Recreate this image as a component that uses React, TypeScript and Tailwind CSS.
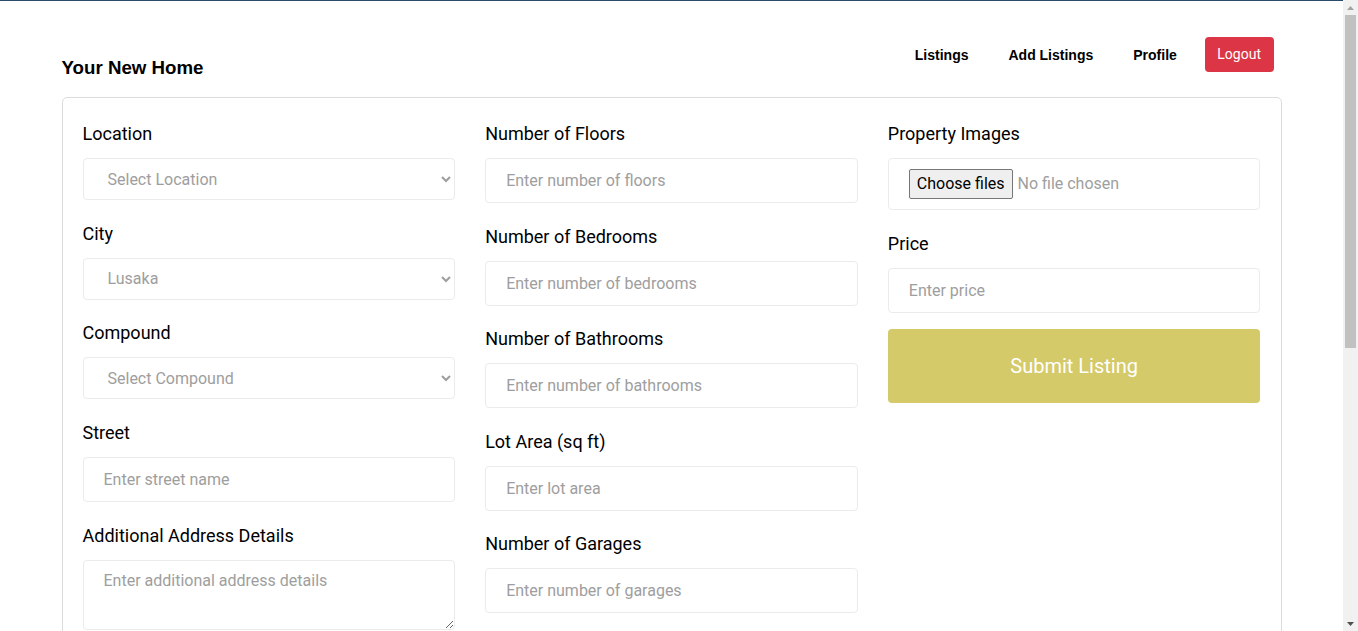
import React from "react";

const inputCls =
  "block w-full h-[45px] px-[20px] border border-[#ebebeb] rounded-[4px] bg-white text-[16px] text-[#444] placeholder:text-[#9e9e9e] outline-none";
const selectCls =
  "block w-full h-[42px] px-[20px] border border-[#ebebeb] rounded-[4px] bg-white text-[16px] text-[#9e9e9e] outline-none";

function Field({
  label,
  children,
  className = "mb-[19.5px]",
}: {
  label: string;
  children: React.ReactNode;
  className?: string;
}) {
  return (
    <div className={className}>
      <label className="block text-[18px] leading-[27px] mb-[11px] text-black">{label}</label>
      {children}
    </div>
  );
}

// fake browser scrollbar, the page in the shot is scrolled to the top
function Scrollbar() {
  return (
    <aside className="w-[15px] h-full bg-[#f1f1f1] flex flex-col items-center shrink-0">
      <div className="h-[15px] w-full flex items-center justify-center">
        <svg width="7" height="4" viewBox="0 0 7 4">
          <path d="M0 4 L3.5 0 L7 4 Z" fill="#a3a3a3" />
        </svg>
      </div>
      <div className="w-[11px] h-[333px] bg-[#c1c1c1]" />
      <div className="flex-1" />
      <div className="h-[15px] w-full flex items-center justify-center">
        <svg width="7" height="4" viewBox="0 0 7 4">
          <path d="M0 0 L7 0 L3.5 4 Z" fill="#505050" />
        </svg>
      </div>
    </aside>
  );
}

export default function App() {
  return (
    <div className="h-screen flex overflow-hidden bg-white font-['Roboto',sans-serif]">
      <main className="flex-1 border-t border-[#2d4a68] overflow-hidden">
        <div className="w-[1220px] mx-auto">
          {/* header */}
          <header className="h-[96px] pt-[36px] flex justify-between items-start">
            <h3 className="mt-[20px] leading-[22px] text-[18.72px] font-bold text-black font-['Liberation_Sans',Arial,sans-serif]">
              Your New Home
            </h3>
            <nav className="flex items-center mr-[8px]">
              <div className="flex items-center gap-[40px] pt-[2px] font-['Liberation_Sans',Arial,sans-serif] text-[14px] font-bold text-black">
                <a href="#">Listings</a>
                <a href="#">Add Listings</a>
                <a href="#">Profile</a>
              </div>
              <button className="ml-[28px] h-[35px] px-[12.5px] rounded-[4px] bg-[#dc3545] text-white text-[14px] font-['Roboto',sans-serif]">
                Logout
              </button>
            </nav>
          </header>

          {/* form card */}
          <form className="border border-[#dcdcdc] rounded-[5px] px-[20px] pt-[22px] min-h-[1000px]">
            <div className="grid grid-cols-3 gap-x-[30px]">
              <div>
                <Field label="Location">
                  <select className={selectCls} defaultValue="">
                    <option value="">Select Location</option>
                  </select>
                </Field>
                <Field label="City">
                  <select className={selectCls} defaultValue="lusaka">
                    <option value="lusaka">Lusaka</option>
                  </select>
                </Field>
                <Field label="Compound">
                  <select className={selectCls} defaultValue="">
                    <option value="">Select Compound</option>
                  </select>
                </Field>
                <Field label="Street" className="mb-[20px]">
                  <input className={inputCls} placeholder="Enter street name" />
                </Field>
                <Field label="Additional Address Details">
                  <textarea
                    className="block w-full h-[70px] px-[20px] py-[10px] border border-[#ebebeb] rounded-[4px] bg-white text-[16px] leading-[20px] placeholder:text-[#9e9e9e] outline-none"
                    placeholder="Enter additional address details"
                  />
                </Field>
              </div>

              <div>
                <Field label="Number of Floors">
                  <input className={inputCls} placeholder="Enter number of floors" />
                </Field>
                <Field label="Number of Bedrooms">
                  <input className={inputCls} placeholder="Enter number of bedrooms" />
                </Field>
                <Field label="Number of Bathrooms">
                  <input className={inputCls} placeholder="Enter number of bathrooms" />
                </Field>
                <Field label="Lot Area (sq ft)">
                  <input className={inputCls} placeholder="Enter lot area" />
                </Field>
                <Field label="Number of Garages">
                  <input className={inputCls} placeholder="Enter number of garages" />
                </Field>
              </div>

              <div>
                <Field label="Property Images">
                  <label className="flex items-center h-[52px] px-[20px] border border-[#ebebeb] rounded-[4px] bg-white text-[16px] cursor-pointer">
                    <input type="file" multiple className="hidden" />
                    <span className="h-[30px] px-[7px] flex items-center border border-[#767676] rounded-[2px] bg-[#efefef] text-black">
                      Choose files
                    </span>
                    <span className="ml-[5px] text-[#9e9e9e]">No file chosen</span>
                  </label>
                </Field>
                <Field label="Price" className="mb-[16.5px]">
                  <input className={inputCls} placeholder="Enter price" />
                </Field>
                <button
                  type="button"
                  className="block w-full h-[74px] rounded-[4px] bg-[#d5ca69] text-white text-[20px]"
                >
                  Submit Listing
                </button>
              </div>
            </div>
          </form>
        </div>
      </main>
      <Scrollbar />
    </div>
  );
}
